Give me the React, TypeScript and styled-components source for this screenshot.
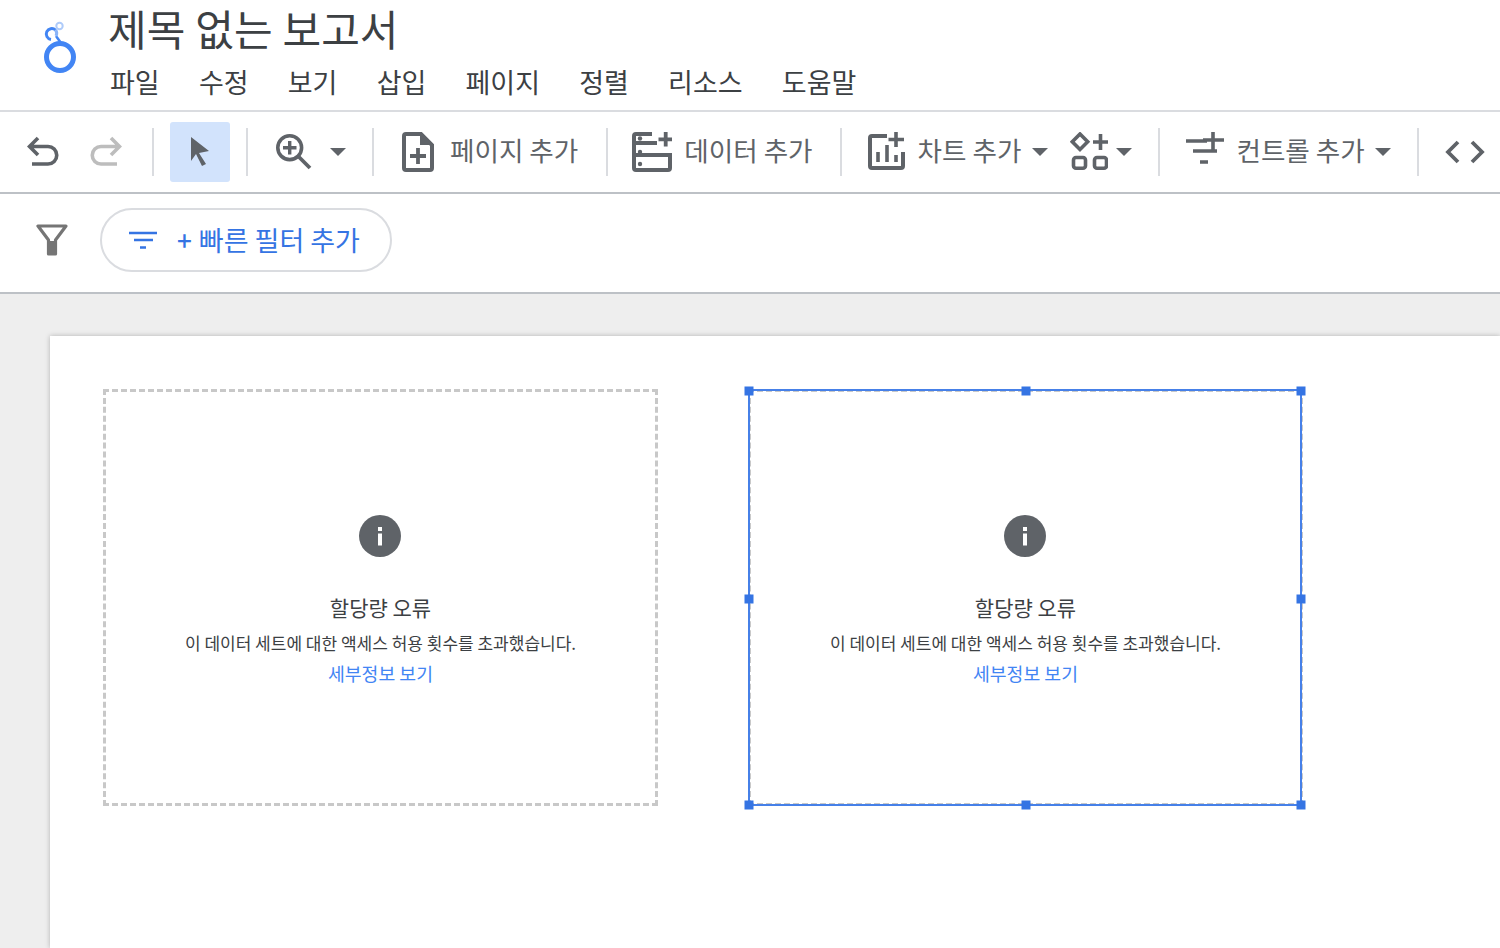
import styled, { createGlobalStyle } from "styled-components";

const FONT = `"Noto Sans CJK KR", "Noto Sans", sans-serif`;
const GREY = "#5f6368";
const BLUE = "#3574e3";

const GlobalStyle = createGlobalStyle`
  html, body {
    margin: 0;
    padding: 0;
    height: 948px;
    overflow: hidden;
    background: #fff;
    font-family: ${FONT};
  }
`;

const menus = ["파일", "수정", "보기", "삽입", "페이지", "정렬", "리소스", "도움말"];

function Logo() {
  return (
    <LogoSvg viewBox="0 0 40 60" fill="none">
      <circle cx="20" cy="42" r="13.5" stroke="#4285f4" strokeWidth="5" />
      <path d="M21 28 L16 21" stroke="#4285f4" strokeWidth="2.5" />
      <path d="M15.500 15 A5.500 5.500 0 1 0 11 24.500" stroke="#4285f4" strokeWidth="3" />
      <path d="M15.500 15 A5.500 5.500 0 0 1 16 21" stroke="#8ab4f8" strokeWidth="3" />
      <circle cx="19.5" cy="11" r="3.2" stroke="#aecbfa" strokeWidth="2" />
    </LogoSvg>
  );
}

function Undo({ color = GREY }: { color?: string }) {
  return (
    <Icon $w={32} $h={32} $ml={0} viewBox="0 0 32 32" fill="none">
      <path d="M11 2 L2.5 10.5 L11 19 M2.5 10.5 H21 A8.5 8.5 0 0 1 21 28 H5" stroke={color} strokeWidth="3.6" />
    </Icon>
  );
}

function Caret({ ml }: { ml: number }) {
  return (
    <CaretSvg $ml={ml} viewBox="0 0 16 8">
      <path d="M0 0 H16 L8 8 Z" fill={GREY} />
    </CaretSvg>
  );
}

function ZoomIcon() {
  return (
    <Icon $w={36} $h={36} $ml={28} viewBox="0 0 36 36" fill="none" stroke={GREY}>
      <circle cx="13.700" cy="13.700" r="11.900" strokeWidth="3.600" />
      <path d="M22 22 L34 34" strokeWidth="3.800" />
      <path d="M13.700 7 V20.500 M7 13.700 H20.500" strokeWidth="3.400" />
    </Icon>
  );
}

function PageIcon() {
  return (
    <Icon $w={32} $h={40} $ml={28} viewBox="0 0 32 40" fill="none">
      <path d="M19 2 H4 A2 2 0 0 0 2 4 V36 A2 2 0 0 0 4 38 H28 A2 2 0 0 0 30 36 V13 Z" stroke={GREY} strokeWidth="4" />
      <path d="M18 0 L32 13 H18 Z" fill={GREY} />
      <path d="M16 16 V32 M8 24 H24" stroke={GREY} strokeWidth="3.800" />
    </Icon>
  );
}

function DataIcon() {
  return (
    <Icon $w={40} $h={40} $ml={24} viewBox="0 0 40 40" fill="none" stroke={GREY}>
      <path d="M20 2 H4 A2 2 0 0 0 2 4 V36 A2 2 0 0 0 4 38 H36 A2 2 0 0 0 38 36 V23 H3 M3 11 H25" strokeWidth="4" />
      <path d="M33.700 0 V14.500 M26.500 7.300 H40" strokeWidth="3.800" />
      <circle cx="8" cy="6.500" r="2.200" fill={GREY} strokeWidth="0" />
      <circle cx="8" cy="20" r="2.200" fill={GREY} strokeWidth="0" />
      <circle cx="8" cy="32" r="2.200" fill={GREY} strokeWidth="0" />
    </Icon>
  );
}

function ChartIcon() {
  return (
    <Icon $w={38} $h={40} $ml={26} viewBox="0 0 38 40" fill="none" stroke={GREY}>
      <path d="M19 4 H4 A2 2 0 0 0 2 6 V34 A2 2 0 0 0 4 36 H33 A2 2 0 0 0 35 34 V20" strokeWidth="4" />
      <path d="M28 0 V15 M20.500 7.500 H36" strokeWidth="3.600" />
      <path d="M10 20 V30 M19 13 V30 M28 23 V30" strokeWidth="3.600" />
    </Icon>
  );
}

function ComponentsIcon() {
  return (
    <Icon $w={38} $h={40} $ml={22} viewBox="0 0 38 40" fill="none" stroke={GREY}>
      <path d="M10 2 L17.700 9.700 L10 17.400 L2.300 9.700 Z" strokeWidth="3.600" />
      <path d="M30.500 2 V18 M23 10 H38" strokeWidth="3.600" />
      <rect x="3.500" y="25.500" width="12" height="10.800" rx="2.500" strokeWidth="3.600" />
      <rect x="24.500" y="25.500" width="12" height="10.800" rx="2.500" strokeWidth="3.600" />
    </Icon>
  );
}

function ControlIcon() {
  return (
    <Icon $w={38} $h={40} $ml={26} viewBox="0 0 38 40" fill="none" stroke={GREY}>
      <path d="M0 9 H21 M7 19 H31 M14 30 H22" strokeWidth="3.600" />
      <path d="M27 0 V18 M17 8 H38" strokeWidth="3.600" />
    </Icon>
  );
}

function CodeIcon() {
  return (
    <Icon $w={40} $h={24} $ml={26} viewBox="0 0 40 24" fill="none" stroke={GREY}>
      <path d="M13 2 L3 12 L13 22 M27 2 L37 12 L27 22" strokeWidth="3.800" />
    </Icon>
  );
}

function ErrorCard({ selected = false }: { selected?: boolean }) {
  return (
    <Card>
      <InfoSvg viewBox="0 0 42 42">
        <circle cx="21" cy="21" r="21" fill={GREY} />
        <rect x="19" y="18.500" width="4" height="12" fill="#fff" />
        <rect x="19" y="12" width="4" height="4" fill="#fff" />
      </InfoSvg>
      <ErrorTitle>할당량 오류</ErrorTitle>
      <ErrorBody>이 데이터 세트에 대한 액세스 허용 횟수를 초과했습니다.</ErrorBody>
      <DetailLink>세부정보 보기</DetailLink>
      {selected && (
        <>
          <SelectionFrame />
          <Handle $x="-2px" $y="-1px" />
          <Handle $x="50%" $y="-1px" />
          <Handle $x="calc(100% + 1px)" $y="-1px" />
          <Handle $x="-2px" $y="calc(50% + 1.500px)" />
          <Handle $x="calc(100% + 1px)" $y="calc(50% + 1.500px)" />
          <Handle $x="-2px" $y="calc(100% + 2px)" />
          <Handle $x="50%" $y="calc(100% + 2px)" />
          <Handle $x="calc(100% + 1px)" $y="calc(100% + 2px)" />
        </>
      )}
    </Card>
  );
}

export default function App() {
  return (
    <Shell>
      <GlobalStyle />
      <Header>
        <Logo />
        <TitleColumn>
          <Title>제목 없는 보고서</Title>
          <Menu>
            {menus.map((m) => (
              <MenuItem key={m}>{m}</MenuItem>
            ))}
          </Menu>
        </TitleColumn>
      </Header>

      <Toolbar>
        <Undo />
        <RedoSlot>
          <Undo color="#bdbdbd" />
        </RedoSlot>
        <Sep $ml={30} />
        <SelectButton>
          <svg width="22" height="30" viewBox="0 0 22 30">
            <path d="M2 0 L20 14 L10 16 L17 27 L13 29 L7 17 L2 24 Z" fill={GREY} />
          </svg>
        </SelectButton>
        <Sep $ml={16} />
        <ZoomIcon />
        <Caret ml={18} />
        <Sep $ml={26} />
        <PageIcon />
        <ToolLabel $ml={16}>페이지 추가</ToolLabel>
        <Sep $ml={28} />
        <DataIcon />
        <ToolLabel $ml={12}>데이터 추가</ToolLabel>
        <Sep $ml={27} />
        <ChartIcon />
        <ToolLabel $ml={12}>차트 추가</ToolLabel>
        <Caret ml={11} />
        <ComponentsIcon />
        <Caret ml={8} />
        <Sep $ml={26} />
        <ControlIcon />
        <ToolLabel $ml={12}>컨트롤 추가</ToolLabel>
        <Caret ml={10} />
        <Sep $ml={26} />
        <CodeIcon />
      </Toolbar>

      <FilterBar>
        <svg width="32" height="32" viewBox="0 0 32 32" fill="none">
          <path d="M2 2 H30 L19.500 16 V30 H12.500 V16 Z" stroke="#757575" strokeWidth="3.200" strokeLinejoin="round" />
          <path d="M13 17 H19 V30 H13 Z" fill="#757575" />
        </svg>
        <FilterPill>
          <svg width="28" height="18" viewBox="0 0 28 18" fill="none" stroke={BLUE} strokeWidth="2.600">
            <path d="M0 2 H28 M5 9 H24 M11 16.500 H17" />
          </svg>
          <PillPlus>+</PillPlus>
          <PillText>빠른 필터 추가</PillText>
        </FilterPill>
      </FilterBar>

      <Canvas>
        <Page>
          <ErrorCard />
          <ErrorCard selected />
        </Page>
      </Canvas>
    </Shell>
  );
}

const Shell = styled.div`
  width: 1500px;
  height: 948px;
  display: flex;
  flex-direction: column;
  overflow: hidden;
`;

const Header = styled.header`
  height: 110px;
  flex: none;
  display: flex;
  border-bottom: 2px solid #dadce0;
`;

const LogoSvg = styled.svg`
  width: 40px;
  height: 60px;
  margin: 15px 28px 0 40px;
  flex: none;
`;

const TitleColumn = styled.div`
  display: flex;
  flex-direction: column;
`;

const Title = styled.div`
  font-family: "Liberation Sans", "Noto Sans CJK KR", sans-serif;
  font-size: 42px;
  line-height: 63.500px;
  word-spacing: -1.700px;
  color: #3c4043;
  height: 56px;
`;

const Menu = styled.nav`
  display: flex;
  gap: 39.200px;
  margin-top: 7px;
  padding-left: 2px;
`;

const MenuItem = styled.span`
  font-size: 27px;
  line-height: 38px;
  color: #3c4043;
`;

const Toolbar = styled.div`
  height: 80px;
  flex: none;
  display: flex;
  align-items: center;
  padding-left: 27px;
  border-bottom: 2px solid #bdc1c6;
`;

const Icon = styled.svg<{ $w: number; $h: number; $ml: number }>`
  width: ${(p) => p.$w}px;
  height: ${(p) => p.$h}px;
  margin-left: ${(p) => p.$ml}px;
  flex: none;
`;

const RedoSlot = styled.span`
  margin-left: 31px;
  display: flex;
  transform: scaleX(-1);
`;

const CaretSvg = styled.svg<{ $ml: number }>`
  width: 16px;
  height: 8px;
  margin-left: ${(p) => p.$ml}px;
  flex: none;
`;

const Sep = styled.span<{ $ml: number }>`
  width: 2px;
  height: 48px;
  background: #dadce0;
  margin-left: ${(p) => p.$ml}px;
  flex: none;
`;

const SelectButton = styled.div`
  width: 60px;
  height: 60px;
  margin-left: 16px;
  background: #d2e3fc;
  border-radius: 3px;
  display: flex;
  align-items: center;
  justify-content: center;
  flex: none;
`;

const ToolLabel = styled.span<{ $ml: number }>`
  font-size: 26.600px;
  line-height: 40px;
  color: ${GREY};
  margin-left: ${(p) => p.$ml}px;
  margin-bottom: 4px;
  white-space: nowrap;
`;

const FilterBar = styled.div`
  height: 92px;
  flex: none;
  display: flex;
  align-items: center;
  padding: 0 0 6px 36px;
  gap: 32px;
  border-bottom: 2px solid #bdc1c6;
`;

const FilterPill = styled.div`
  width: 292px;
  height: 64px;
  box-sizing: border-box;
  border: 2px solid #dadce0;
  border-radius: 32px;
  display: flex;
  align-items: center;
  padding-left: 27px;
  color: ${BLUE};
`;

const PillPlus = styled.span`
  font-size: 26px;
  line-height: 30px;
  margin-left: 20px;
  font-weight: 500;
`;

const PillText = styled.span`
  font-size: 27px;
  line-height: 40px;
  margin-left: 7px;
  white-space: nowrap;
`;

const Canvas = styled.main`
  flex: 1;
  min-height: 0;
  background: #eeeeee;
  padding: 42px 0 0 50px;
  overflow: hidden;
`;

const Page = styled.section`
  height: 100%;
  background: #fff;
  box-shadow: 0 0 5px rgba(0, 0, 0, 0.25);
  display: flex;
  align-items: flex-start;
  gap: 90px;
  padding: 53px 0 0 53px;
  box-sizing: border-box;
`;

const Card = styled.div`
  position: relative;
  width: 555px;
  height: 417px;
  box-sizing: border-box;
  flex: none;
  display: flex;
  flex-direction: column;
  align-items: center;
  padding-top: 123px;
  border: 3px dashed #c8c8c8;
`;

const SelectionFrame = styled.span`
  position: absolute;
  inset: -3px -2px -3px -3px;
  border: 2px solid #4680e8;
`;

const InfoSvg = styled.svg`
  width: 42px;
  height: 42px;
  flex: none;
  margin-right: 1px;
`;

const ErrorTitle = styled.div`
  font-size: 21px;
  line-height: 30px;
  color: #3c4043;
  margin-top: 35px;
`;

const ErrorBody = styled.div`
  font-size: 17px;
  line-height: 26px;
  color: #3c4043;
  margin-top: 8px;
  white-space: nowrap;
`;

const DetailLink = styled.a`
  font-size: 18.300px;
  line-height: 26px;
  color: #4285f4;
  margin-top: 4px;
`;

const Handle = styled.span<{ $x: string; $y: string }>`
  position: absolute;
  left: ${(p) => p.$x};
  top: ${(p) => p.$y};
  width: 9px;
  height: 9px;
  transform: translate(-50%, -50%);
  background: ${BLUE};
`;
